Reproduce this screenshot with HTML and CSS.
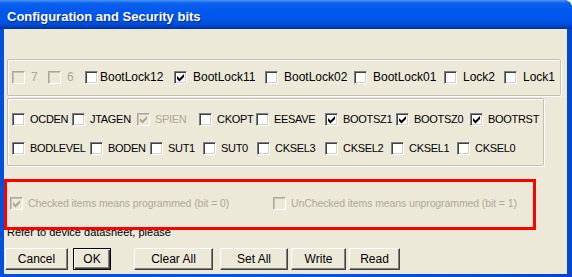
FILE: index.html
```html
<!DOCTYPE html>
<html lang="en">
<head>
    <meta charset="UTF-8">
    <title>Configuration and Security bits</title>
    <link rel="stylesheet" href="styles.css">
</head>
<body>
    <div class="window">
        <div class="titlebar"><span class="title">Configuration and Security bits</span></div>
        <div class="client">
            <!-- lock bits -->
            <div class="group group-lock">
                <div class="bits bits-lock">
                    <label class="bit off"><span class="box"></span>7</label>
                    <label class="bit off"><span class="box"></span>6</label>
                    <label class="bit tight"><span class="box"></span>BootLock12</label>
                    <label class="bit"><span class="box checked"><svg viewBox="0 0 11 11"><path d="M2 4 L4.5 6.5 L9 2 L9 5 L4.5 9.5 L2 7 Z"/></svg></span>BootLock11</label>
                    <label class="bit"><span class="box"></span>BootLock02</label>
                    <label class="bit"><span class="box"></span>BootLock01</label>
                    <label class="bit"><span class="box"></span>Lock2</label>
                    <label class="bit"><span class="box"></span>Lock1</label>
                </div>
            </div>

            <!-- fuse bits -->
            <div class="group group-fuse">
                <div class="bits bits-fuse-a">
                    <label class="bit caps"><span class="box"></span>OCDEN</label>
                    <label class="bit caps"><span class="box"></span>JTAGEN</label>
                    <label class="bit caps off"><span class="box checked"><svg viewBox="0 0 11 11"><path d="M2 4 L4.5 6.5 L9 2 L9 5 L4.5 9.5 L2 7 Z"/></svg></span>SPIEN</label>
                    <label class="bit caps"><span class="box"></span>CKOPT</label>
                    <label class="bit caps"><span class="box"></span>EESAVE</label>
                    <label class="bit caps"><span class="box checked"><svg viewBox="0 0 11 11"><path d="M2 4 L4.5 6.5 L9 2 L9 5 L4.5 9.5 L2 7 Z"/></svg></span>BOOTSZ1</label>
                    <label class="bit caps"><span class="box checked"><svg viewBox="0 0 11 11"><path d="M2 4 L4.5 6.5 L9 2 L9 5 L4.5 9.5 L2 7 Z"/></svg></span>BOOTSZ0</label>
                    <label class="bit caps"><span class="box checked"><svg viewBox="0 0 11 11"><path d="M2 4 L4.5 6.5 L9 2 L9 5 L4.5 9.5 L2 7 Z"/></svg></span>BOOTRST</label>
                </div>
                <div class="bits bits-fuse-b">
                    <label class="bit caps"><span class="box"></span>BODLEVEL</label>
                    <label class="bit caps"><span class="box"></span>BODEN</label>
                    <label class="bit caps"><span class="box"></span>SUT1</label>
                    <label class="bit caps"><span class="box"></span>SUT0</label>
                    <label class="bit caps"><span class="box"></span>CKSEL3</label>
                    <label class="bit caps"><span class="box"></span>CKSEL2</label>
                    <label class="bit caps"><span class="box"></span>CKSEL1</label>
                    <label class="bit caps"><span class="box"></span>CKSEL0</label>
                </div>
            </div>

            <div class="legend">
                <label class="bit off small"><span class="box checked"><svg viewBox="0 0 11 11"><path d="M2 4 L4.5 6.5 L9 2 L9 5 L4.5 9.5 L2 7 Z"/></svg></span>Checked items means programmed (bit = 0)</label>
                <label class="bit off small"><span class="box"></span>UnChecked items means unprogrammed (bit = 1)</label>
            </div>

            <p class="note">Refer to device datasheet, please</p>

            <div class="buttons">
                <button class="btn btn-cancel">Cancel</button>
                <button class="btn btn-ok">OK</button>
                <button class="btn btn-clear">Clear All</button>
                <button class="btn btn-set">Set All</button>
                <button class="btn btn-write">Write</button>
                <button class="btn btn-read">Read</button>
            </div>

            <div class="marker"></div>
        </div>
    </div>
</body>
</html>
```

FILE: styles.css
```css
body {
    margin: 0;
    font-family: "Liberation Sans", Arial, sans-serif;
    background: #fff;
}
.window {
    width: 572px;
    height: 277px;
    display: flex;
    flex-direction: column;
    background: linear-gradient(to right, #0050dc, #0058e6 50%, #0046d2);
    border-radius: 0 8px 0 0;
    overflow: hidden;
}
.titlebar {
    height: 29px;
    flex: none;
    display: flex;
    align-items: center;
    padding-left: 7px;
    background: linear-gradient(#4a96fa 0, #0d62ec 3px, #0058ee 10px, #0056e8 20px, #0049d6 25px, #00309e 29px);
}
.title {
    margin-top: 3px;
    color: #fff;
    font-size: 13px;
    font-weight: bold;
    text-shadow: 1px 1px #0a2a90;
}
.client {
    flex: 1;
    position: relative;
    margin: 0 5px 3px 4px;
    background: #ece9d8;
}

/* group boxes */
.group {
    margin-left: 3px;
    border: 1px solid #c4c1b0;
    box-shadow: inset 1px 1px #fff, 1px 1px #fff;
    border-radius: 2px;
    box-sizing: border-box;
    padding-left: 4px;
}
.group-lock {
    margin-top: 30px;
    width: 554px;
    padding-top: 11px;
    padding-bottom: 11px;
}
.group-fuse {
    margin-top: 2px;
    width: 537px;
    padding-top: 14px;
    padding-bottom: 10px;
}
.bits {
    display: grid;
    align-items: center;
    height: 13px;
}
.bits-lock { grid-template-columns: 36px 37px 89px 91px 89px 90px 60px auto; }
.bits-fuse-a { grid-template-columns: 60px 65px 62px 57px 69px 71px 74px auto; }
.bits-fuse-b {
    margin-top: 16px;
    grid-template-columns: 78px 60px 53px 54px 68px 66px 66px auto;
}

/* checkbox + label */
.bit {
    display: flex;
    align-items: center;
    gap: 6px;
    font-size: 12px;
    line-height: 13px;
    color: #000;
    white-space: nowrap;
}
.bit.tight { gap: 2px; }
.bit.caps {
    gap: 5px;
    font-size: 11px;
    letter-spacing: -0.3px;
}
.bit.small { font-size: 10.5px; gap: 5px; letter-spacing: -0.1px; }
.bit.off { color: #aca899; }
.box {
    width: 13px;
    height: 13px;
    flex: none;
    box-sizing: border-box;
    border: 1px solid;
    border-color: #808080 #fff #fff #808080;
    box-shadow: inset 1px 1px #404040, inset -1px -1px #d4d0c8;
    background: #fff;
    display: flex;
    align-items: center;
    justify-content: center;
}
.box svg {
    width: 11px;
    height: 11px;
    display: block;
    fill: #000;
}
.off .box {
    background: #ece9d8;
    border-color: #aca899 #fff #fff #aca899;
    box-shadow: inset 1px 1px #c8c4b4, inset -1px -1px #ece9d8;
}
.off .box svg { fill: #aca899; }

.legend {
    margin-top: 31px;
    padding-left: 6px;
    display: grid;
    grid-template-columns: 263px auto;
    height: 13px;
}
.note {
    margin: 16px 0 0 3px;
    font-size: 11px;
    line-height: 13px;
    color: #000;
}

/* buttons */
.buttons {
    margin-top: 9px;
    padding-left: 1px;
    display: flex;
    height: 22px;
}
.btn {
    height: 22px;
    padding: 0;
    font-family: "Liberation Sans", Arial, sans-serif;
    font-size: 12px;
    color: #000;
    background: #ece9d8;
    border: 1px solid;
    border-color: #fff #404040 #404040 #fff;
    box-shadow: inset -1px -1px #808080;
}
.btn-cancel { width: 63px; }
.btn-ok {
    width: 38px;
    margin-left: 5px;
    border-color: #000;
    box-shadow: inset 1px 1px #fff, inset -1px -1px #404040, inset -2px -2px #808080;
}
.btn-clear { width: 79px; margin-left: 23px; }
.btn-set { width: 68px; margin-left: 7px; }
.btn-write { width: 55px; margin-left: 3px; }
.btn-read { width: 51px; margin-left: 3px; }

/* red annotation frame drawn over the dialog */
.marker {
    position: absolute;
    left: 0;
    top: 150px;
    width: 532px;
    height: 51px;
    border: 3px solid #f00;
    box-sizing: border-box;
}
```
